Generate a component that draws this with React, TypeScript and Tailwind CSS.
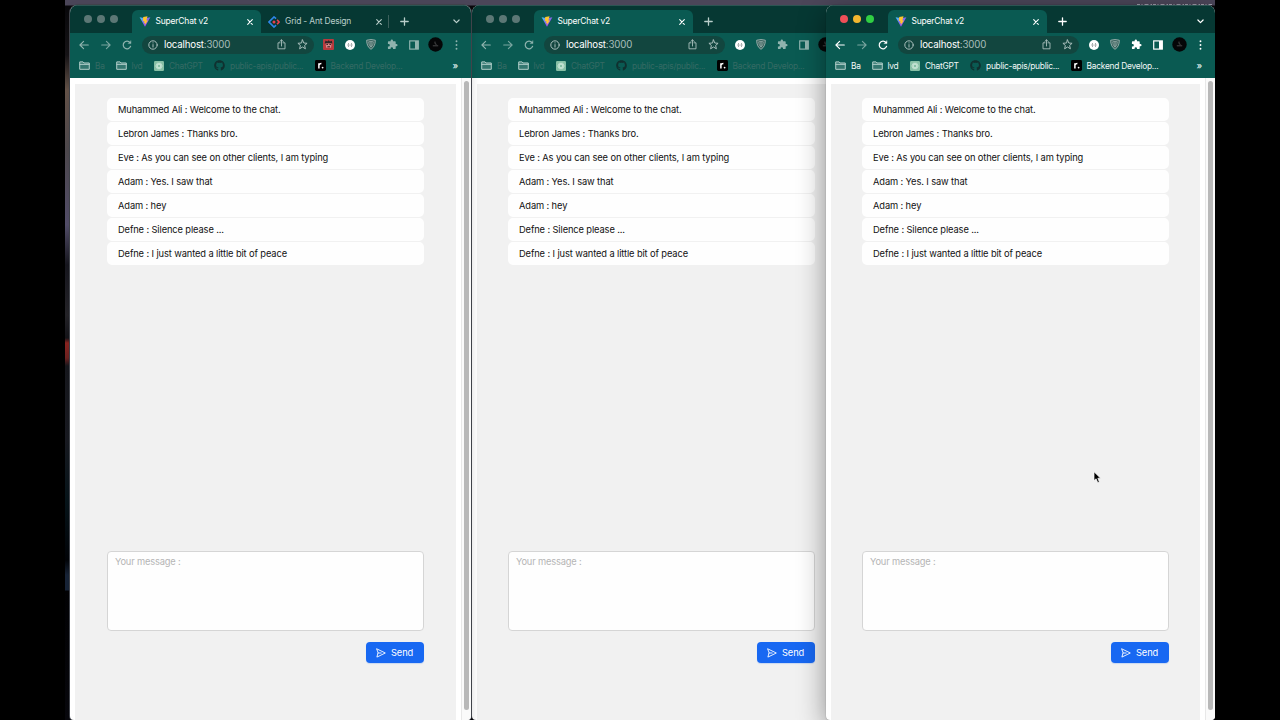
import React from "react";
import clsx from "clsx";
import { FaGithub } from "react-icons/fa";

const messages = [
  { from: "Muhammed Ali", text: "Welcome to the chat." },
  { from: "Lebron James", text: "Thanks bro." },
  { from: "Eve", text: "As you can see on other clients, I am typing" },
  { from: "Adam", text: "Yes. I saw that" },
  { from: "Adam", text: "hey" },
  { from: "Defne", text: "Silence please ..." },
  { from: "Defne", text: "I just wanted a little bit of peace" },
];

const stroke = {
  fill: "none",
  stroke: "currentColor",
  strokeWidth: 1.1,
  strokeLinecap: "round" as const,
  strokeLinejoin: "round" as const,
};

function ViteLogo() {
  return (
    <svg width="12" height="11" viewBox="0 0 12 11">
      <defs>
        <linearGradient id="vite" x1="0" y1="0" x2="1" y2="1">
          <stop offset="0" stopColor="#41d1ff" />
          <stop offset="0.55" stopColor="#8f5be8" />
          <stop offset="1" stopColor="#bd34fe" />
        </linearGradient>
      </defs>
      <path d="M0.6 1.2 L6 10.8 L11.4 1.2 L6.2 2.2 Z" fill="url(#vite)" />
      <path d="M8.5 0.2 L4.2 1 L3.9 5.2 L5.4 5 L5 7.2 L6.1 6.9 L5.8 9 L8.9 4.4 L7.4 4.6 Z" fill="#ffc52e" />
    </svg>
  );
}

function AntLogo() {
  return (
    <svg width="12" height="12" viewBox="0 0 11 11" fill="none" strokeWidth="1.5">
      <path d="M7.4 2.4 L5.5 0.9 L0.9 5.5 L5.5 10.1 L7.4 8.4" stroke="#2f86e8" />
      <path d="M8.3 3.5 L10.1 5.5 L8.3 7.5" stroke="#e8404e" />
      <circle cx="5.5" cy="5.5" r="1.4" fill="#e8404e" />
    </svg>
  );
}

function Close() {
  return (
    <svg width="6" height="6" viewBox="0 0 6 6" {...stroke}>
      <path d="M0.7 0.7 L5.3 5.3 M5.3 0.7 L0.7 5.3" />
    </svg>
  );
}

function Plus() {
  return (
    <svg width="9" height="9" viewBox="0 0 9 9" {...stroke} strokeWidth={1.3}>
      <path d="M4.5 0.8 V8.2 M0.8 4.5 H8.2" />
    </svg>
  );
}

function ChevronDown() {
  return (
    <svg width="7" height="5" viewBox="0 0 7 5" {...stroke} strokeWidth={1.2}>
      <path d="M0.9 1 L3.5 3.6 L6.1 1" />
    </svg>
  );
}

function Arrow({ flip }: { flip?: boolean }) {
  return (
    <svg width="10" height="10" viewBox="0 0 10 10" {...stroke} className={clsx(flip && "-scale-x-100")}>
      <path d="M9.3 5 H1 M4.6 1.3 L0.9 5 L4.6 8.7" />
    </svg>
  );
}

function Reload() {
  return (
    <svg width="10" height="10" viewBox="0 0 10 10" {...stroke} strokeWidth={1.2}>
      <path d="M8.6 6.3 A3.8 3.8 0 1 1 8 2.6" />
      <path d="M9 0.9 V3.6 H6.2 Z" fill="currentColor" strokeWidth="0.4" />
    </svg>
  );
}

function Info() {
  return (
    <svg width="10" height="10" viewBox="0 0 10 10" {...stroke} strokeWidth={1}>
      <circle cx="5" cy="5" r="4.2" />
      <path d="M5 4.6 V7.1 M5 2.8 V3" />
    </svg>
  );
}

function Share() {
  return (
    <svg width="9" height="11" viewBox="0 0 9 11" {...stroke} strokeWidth={0.9}>
      <path d="M3 3.8 H1 V9.8 H8 V3.8 H6 M4.5 7 V0.9 M2.8 2.5 L4.5 0.8 L6.2 2.5" />
    </svg>
  );
}

function Star() {
  return (
    <svg width="11" height="11" viewBox="0 0 11 11" {...stroke} strokeWidth={1}>
      <path d="M5.5 0.9 L6.8 4 L10.1 4.3 L7.6 6.5 L8.4 9.8 L5.5 8 L2.6 9.8 L3.4 6.5 L0.9 4.3 L4.2 4 Z" />
    </svg>
  );
}

function RedExtension() {
  return (
    <svg width="11" height="11" viewBox="0 0 11 11">
      <rect width="11" height="11" rx="1" fill="#b93a3e" />
      <path d="M1.6 4.6 L2.6 1.4 L4.2 2.6 L5.6 1.2 L7 2.6 L8.8 1.8 L9.4 4.6 Z" fill="#2e2628" />
      <path d="M2.6 4.4 H8.6 L8 8.8 H3.2 Z" fill="#d9898a" />
      <path d="M3.4 5.4 H5 M6.4 5.4 H8 M4.4 7.8 H7" stroke="#33191c" strokeWidth="1" />
    </svg>
  );
}

function BracketExtension() {
  return (
    <svg width="10" height="10" viewBox="0 0 10 10">
      <circle cx="5" cy="5" r="5" fill="#fff" />
      <path d="M3.6 3.2 Q2.5 5 3.6 6.8 M6.4 3.2 Q7.5 5 6.4 6.8" fill="none" stroke="#5f6968" strokeWidth="0.7" />
      <circle cx="5" cy="5" r="0.5" fill="#5f6968" />
    </svg>
  );
}

function Shield() {
  return (
    <svg width="10" height="11" viewBox="0 0 10 11" fill="none" stroke="#a3b5b2">
      <path d="M0.7 1.2 Q5 -0.1 9.3 1.2 Q9.4 7.6 5 10.3 Q0.6 7.6 0.7 1.2 Z" fill="#355f5a" strokeWidth="0.9" />
      <path d="M2.7 2.8 Q5 2.1 7.3 2.8 Q7.2 6.4 5 8.2 Q2.8 6.4 2.7 2.8 Z" strokeWidth="0.7" />
      <path d="M5 3 V7.6" strokeWidth="0.9" />
    </svg>
  );
}

function Puzzle() {
  return (
    <svg width="11" height="11" viewBox="0 0 24 24" fill="currentColor">
      <path d="M20.5 11H19V7c0-1.1-.9-2-2-2h-4V3.5a2.5 2.5 0 0 0-5 0V5H4c-1.1 0-2 .9-2 2v3.8h1.5a2.7 2.7 0 0 1 0 5.4H2V20c0 1.1.9 2 2 2h3.8v-1.5a2.7 2.7 0 0 1 5.4 0V22H17c1.1 0 2-.9 2-2v-4h1.5a2.5 2.5 0 0 0 0-5z" />
    </svg>
  );
}

function SidePanel() {
  return (
    <svg width="10" height="10" viewBox="0 0 10 10">
      <rect x="0.7" y="0.9" width="8.6" height="8.2" fill="none" stroke="currentColor" strokeWidth="1.2" />
      <rect x="6" y="1" width="3.3" height="8" fill="currentColor" />
    </svg>
  );
}

function Avatar() {
  return (
    <svg width="15" height="15" viewBox="0 0 15 15" className="shrink-0">
      <circle cx="7.5" cy="7.5" r="7.2" fill="#050607" />
      <path d="M7 4.6 V6.6 M7 6.8 L8.6 7.4 M4.8 8.8 H10.2" stroke="#777" strokeWidth="0.6" fill="none" />
    </svg>
  );
}

function Kebab() {
  return (
    <svg width="3" height="10" viewBox="0 0 3 10" fill="currentColor">
      <circle cx="1.5" cy="1.3" r="0.95" />
      <circle cx="1.5" cy="5" r="0.95" />
      <circle cx="1.5" cy="8.7" r="0.95" />
    </svg>
  );
}

function Folder() {
  return (
    <svg width="11" height="9" viewBox="0 0 12 10" {...stroke} strokeWidth={1.1}>
      <path d="M0.7 8.8 V1 H4.4 L5.4 2.2 H11.3 V8.8 Z" fill="currentColor" fillOpacity="0.25" />
      <path d="M0.8 3.7 H11.2" />
    </svg>
  );
}

function ChatGptLogo() {
  return (
    <svg width="10" height="10" viewBox="0 0 10 10">
      <rect width="10" height="10" rx="1.2" fill="#86bfa5" />
      <g fill="none" stroke="#d8eee3" strokeWidth="0.6">
        <ellipse cx="5" cy="5" rx="3.3" ry="1.7" />
        <ellipse cx="5" cy="5" rx="3.3" ry="1.7" transform="rotate(60 5 5)" />
        <ellipse cx="5" cy="5" rx="3.3" ry="1.7" transform="rotate(120 5 5)" />
      </g>
    </svg>
  );
}

function RoadmapLogo() {
  return (
    <svg width="11" height="11" viewBox="0 0 11 11">
      <rect width="11" height="11" rx="1.4" fill="#000" />
      <path d="M3.9 8.4 V3.3 M3.9 5.2 Q4.3 3.5 6.4 3.5" stroke="#fff" strokeWidth="1.5" fill="none" />
      <circle cx="7.6" cy="7.6" r="0.9" fill="#fff" />
    </svg>
  );
}

function SendIcon() {
  return (
    <svg width="10" height="10" viewBox="0 0 10 10" {...stroke} strokeWidth={0.9}>
      <path d="M0.9 0.9 L9.3 5 L0.9 9.1 L2 5 Z M2 5 H5.2" />
    </svg>
  );
}

function Cell({ children }: { children: React.ReactNode }) {
  return <div className="flex w-[21.3px] shrink-0 items-center justify-center">{children}</div>;
}

function TabStrip({ active, secondTab }: { active?: boolean; secondTab?: boolean }) {
  return (
    <div className="flex h-7 shrink-0 items-end bg-[#063833] shadow-[inset_0_1px_0_#2c5553]">
      <div className="flex h-[23px] w-[62px] shrink-0 items-center gap-[5.4px] pb-[5px] pl-[13.5px]">
        <span className={clsx("size-2 rounded-full", active ? "bg-[#ee4f58]" : "bg-[#5c7775]")} />
        <span className={clsx("size-2 rounded-full", active ? "bg-[#f3b62f]" : "bg-[#5c7775]")} />
        <span className={clsx("size-2 rounded-full", active ? "bg-[#30cf43]" : "bg-[#5c7775]")} />
      </div>
      <div
        className={clsx(
          "flex h-[23px] shrink-0 items-center rounded-t-md bg-[#0a5a52] pr-[8px] pl-[7px] text-white",
          secondTab ? "w-[129px]" : "w-[159px]"
        )}
      >
        <ViteLogo />
        <span className="ml-[4.5px] flex-1 text-[8.5px] tracking-[-0.2px]">SuperChat v2</span>
        <Close />
      </div>
      {secondTab && (
        <div className="flex h-[23px] w-[128px] shrink-0 items-center pl-[7px] text-[#b9ceca]">
          <AntLogo />
          <span className="ml-[5px] flex-1 text-[8.5px] tracking-[-0.2px]">Grid - Ant Design</span>
          <Close />
          <span className="ml-[6.5px] h-[13px] w-px bg-[#3c605c]" />
        </div>
      )}
      <div className={clsx("flex h-[23px] flex-1 items-center justify-between pr-[11.5px] pl-[10.5px]", active ? "text-white" : "text-[#b9ceca]")}>
        <Plus />
        <ChevronDown />
      </div>
    </div>
  );
}

function AddressBar({ active, extra }: { active?: boolean; extra?: boolean }) {
  return (
    <div className={clsx("flex h-[23px] shrink-0 items-center pr-[3.8px] pl-[3.6px]", active ? "text-white" : "text-[#8fb3ae]")}>
      <Cell><Arrow /></Cell>
      <div className="text-[#79a5a0]"><Cell><Arrow flip /></Cell></div>
      <Cell><Reload /></Cell>
      <div className="mr-[4.5px] ml-[4.5px] flex h-[18px] flex-1 items-center rounded-full bg-[#12463f] pr-[5.5px] pl-[6.5px] text-[#a9bfbc]">
        <Info />
        <span className="ml-[5.5px] flex-1 pt-px text-[9.7px] tracking-[-0.17px] text-[#a9bfbc]">
          <span className="text-white">localhost</span>:3000
        </span>
        <Share />
        <span className="ml-[11.5px]"><Star /></span>
      </div>
      {extra && <Cell><RedExtension /></Cell>}
      <Cell><BracketExtension /></Cell>
      <Cell><Shield /></Cell>
      <Cell><Puzzle /></Cell>
      <Cell><SidePanel /></Cell>
      <Cell><Avatar /></Cell>
      <Cell><Kebab /></Cell>
    </div>
  );
}

function Bookmark({ icon, label, width }: { icon: React.ReactNode; label: string; width: string }) {
  return (
    <div className={clsx("flex shrink-0 items-center gap-[5px] whitespace-nowrap", width)}>
      <span className="shrink-0">{icon}</span>
      <span>{label}</span>
    </div>
  );
}

function BookmarksBar({ active }: { active?: boolean }) {
  return (
    <div className={clsx("flex h-[22px] shrink-0 items-center pb-[2px] pl-[9px] text-[8.4px] tracking-[-0.25px]", active ? "text-[#f1f8f7]" : "text-[#356a64]")}>
      <Bookmark width="w-[36.5px]" label="Ba" icon={<span className="text-[#b5d0cc]"><Folder /></span>} />
      <Bookmark width="w-[38.5px]" label="lvd" icon={<span className="text-[#b5d0cc]"><Folder /></span>} />
      <Bookmark width="w-[60px]" label="ChatGPT" icon={<ChatGptLogo />} />
      <Bookmark width="w-[100.5px]" label="public-apis/public..." icon={<FaGithub size={11} className="text-[#10302f]" />} />
      <Bookmark width="w-[90px]" label="Backend Develop..." icon={<RoadmapLogo />} />
      <span className="mr-[13px] ml-auto pb-px text-[9px] leading-none font-semibold text-[#d8e8e6]">»</span>
    </div>
  );
}

function Chat({ wide }: { wide?: boolean }) {
  return (
    <div className={clsx("flex flex-1 flex-col bg-[#f1f1f1] pt-[13.5px] pb-[57px]", wide ? "px-8" : "px-[31px]")}>
      <ul className="flex flex-col gap-px">
        {messages.map((m, i) => (
          <li key={i} className="flex h-[23px] items-center rounded-[5px] bg-[#fefefe] pt-px pl-[11px] text-[9.3px] tracking-[-0.11px] text-[#111]">
            {m.from} : {m.text}
          </li>
        ))}
      </ul>
      <textarea
        placeholder="Your message :"
        className="mt-auto h-20 shrink-0 resize-none rounded border border-[#d5d5d5] bg-[#fefefe] px-[7px] py-[3px] text-[9.3px] leading-[14px] tracking-[-0.17px] placeholder:text-[#b5b5b5]"
      />
      <button className="mt-[11px] flex h-[21px] w-[58px] shrink-0 items-center gap-[5px] self-end rounded-[4px] bg-[#1868f2] pl-2.5 text-[9.3px] tracking-[-0.1px] text-white shadow-[0_1px_1px_#1868f230]">
        <SendIcon />
        Send
      </button>
    </div>
  );
}

function BrowserWindow({ className, active, secondTab }: { className: string; active?: boolean; secondTab?: boolean }) {
  return (
    <div className={clsx("absolute top-[5px] flex h-[715px] flex-col overflow-hidden rounded-t-lg rounded-b bg-white", className)}>
      <TabStrip active={active} secondTab={secondTab} />
      <div className="flex shrink-0 flex-col bg-[#0a5a52]">
        <AddressBar active={active} extra={secondTab} />
        <BookmarksBar active={active} />
      </div>
      <div className="flex min-h-0 flex-1">
        <div className="flex flex-1 pt-[6px] pr-[5px] pl-[5px]">
          <Chat wide={secondTab} />
        </div>
        <div className="flex w-2.5 justify-center border-l border-[#e8e8e8] bg-[#fafafa] pt-[3px] pb-[10px]">
          <div className="w-[5px] rounded-full bg-[#b8b8b8]" />
        </div>
      </div>
    </div>
  );
}

export default function App() {
  return (
    <div className="h-[720px] w-[1280px] overflow-hidden bg-black px-[65px] font-['Inter',sans-serif]">
      <div className="relative h-full overflow-hidden bg-[linear-gradient(180deg,#4b4659_0px,#4b4659_5px,#08080b_6px,#171417_55px,#67554a_90px,#514b50_150px,#55506c_225px,#17171f_265px,#26252a_315px,#15151a_338px,#8f2521_343px,#702322_358px,#17181e_366px,#191b22_440px,#07151b_500px,#020408_560px,#182539_575px,#182539_590px,#020204_591px,#08080d_720px)]">
        {/* menu bar labels peeking out above the windows */}
        <svg className="absolute top-[3px] left-[1070px]" width="80" height="3" viewBox="0 0 80 3">
          <path d="M2 1.5 H77" stroke="#a5a2af" strokeWidth="1.2" strokeDasharray="3 1.5 1 2 4 2 1.5 1" />
        </svg>
        <BrowserWindow className="left-[407px] w-[389px]" />
        <BrowserWindow className="left-[5px] w-[401px] shadow-[0_0_0_1px_#40434a,0_4px_10px_rgba(0,0,0,0.18)]" secondTab />
        <BrowserWindow className="left-[761px] w-[389px] shadow-[0_0_1px_rgba(0,0,0,0.5),0_8px_28px_rgba(0,0,0,0.42)]" active />
        <svg className="absolute top-[471px] left-[1028px]" width="9" height="13" viewBox="0 0 9 13">
          <path d="M1 0.8 V9.6 L3.1 7.8 L4.7 11.6 L6.4 10.9 L4.8 7.2 H7.6 Z" fill="#000" stroke="#fff" strokeWidth="0.7" />
        </svg>
      </div>
    </div>
  );
}
